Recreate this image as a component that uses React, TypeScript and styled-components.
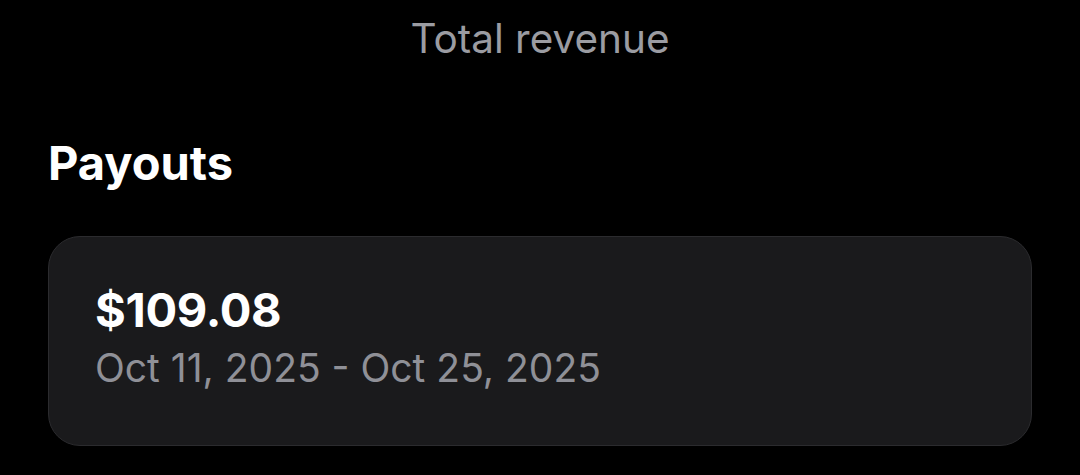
import React from "react";
import styled, { createGlobalStyle } from "styled-components";

const GlobalStyle = createGlobalStyle`
  html, body {
    margin: 0;
    padding: 0;
    background: #000;
  }
  body {
    font-family: Inter, "Noto Sans", sans-serif;
    -webkit-font-smoothing: antialiased;
  }
`;

const Page = styled.div`
  width: 1080px;
  height: 475px;
  overflow: hidden;
  background: #000;
  padding: 0 48px;
  box-sizing: border-box;
`;

const TopLabel = styled.div`
  text-align: center;
  font-size: 40.5px;
  line-height: 48px;
  color: #9b9ca2;
  padding-top: 15px;
`;

const SectionTitle = styled.h2`
  margin: 72px 0 0;
  font-size: 47px;
  font-weight: 700;
  line-height: 56px;
  color: #fff;
`;

const PayoutCard = styled.div`
  margin-top: 45px;
  height: 210px;
  box-sizing: border-box;
  background: #1a1a1c;
  border: 1.5px solid #2b2b2e;
  border-radius: 32px;
  padding: 45px 46px 0;
  display: flex;
  flex-direction: column;
  gap: 6px;
`;

const Amount = styled.div`
  font-size: 47px;
  font-weight: 700;
  line-height: 56px;
  color: #fff;
  letter-spacing: -0.3px;
`;

const Period = styled.div`
  font-size: 39px;
  line-height: 48px;
  color: #8f9097;
`;

export default function App() {
  return (
    <>
      <GlobalStyle />
      <Page>
        <TopLabel>Total revenue</TopLabel>
        <SectionTitle>Payouts</SectionTitle>
        <PayoutCard>
          <Amount>$109.08</Amount>
          <Period>Oct 11, 2025 - Oct 25, 2025</Period>
        </PayoutCard>
      </Page>
    </>
  );
}
